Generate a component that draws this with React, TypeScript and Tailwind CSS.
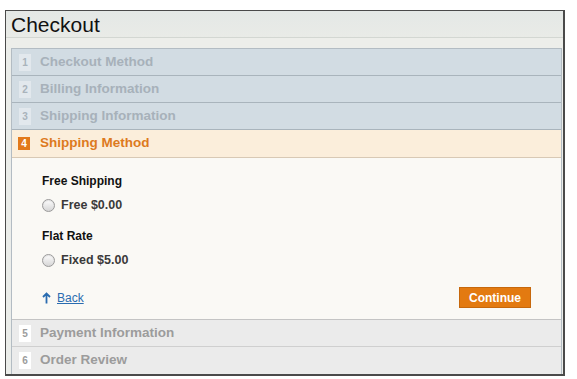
import React from "react";

const font = { fontFamily: '"Liberation Sans", Arial, sans-serif' };

const doneSteps = ["Checkout Method", "Billing Information", "Shipping Information"];
const nextSteps = ["Payment Information", "Order Review"];

const Radio = ({ label }: { label: string }) => (
    <label className="flex h-[14px] items-center gap-[6px]">
        <span className="h-[13px] w-[13px] rounded-full border border-[#9a9a9a] bg-gradient-to-b from-[#fdfdfd] to-[#d6d6d6] shadow-[inset_0_1px_1px_rgba(0,0,0,0.1)]" />
        <span className="text-[12.5px] font-bold leading-[14px] text-[#3a3a3a]">{label}</span>
    </label>
);

export default function App() {
    return (
        <div className="min-h-screen w-[577px] bg-white pl-[5px] pt-[10px]" style={font}>
            <div className="flex w-[560px] flex-col border border-[#4a4a4a] border-r-2 border-b-2 bg-[#ebedea]">
                <div className="flex h-[27px] items-center border-b border-[#d3d7d2] bg-gradient-to-b from-[#e4e8e6] to-[#e9ebe7] pl-[5px]">
                    <h1 className="text-[21px] leading-none text-[#111]">Checkout</h1>
                </div>
                <div className="h-[10px] bg-[#edeeea]" />
                <div className="ml-[5px] mr-[1px] flex flex-col border-x border-t border-[#b3bcc3]">
                    {doneSteps.map((s, i) => (
                        <div key={s} className="flex h-[27px] items-center border-b border-[#a9b4bc] bg-[#d2dce3] pl-[7px]">
                            <span className="flex h-[17px] w-[12px] items-center justify-center bg-[#e2e8ed] text-[10px] font-bold text-[#a9b3bb]">{i + 1}</span>
                            <span className="ml-[9px] text-[13.5px] font-bold text-[#a7b1ba]">{s}</span>
                        </div>
                    ))}
                    <div className="flex h-[28px] items-center border-b border-[#d8c9b5] bg-[#fbeedb] pl-[6px]">
                        <span className="flex h-[13px] w-[12px] items-center justify-center bg-[#e2791b] text-[10px] font-bold text-white">4</span>
                        <span className="ml-[10px] text-[13.5px] font-bold text-[#dd7a1e]">Shipping Method</span>
                    </div>
                    <div className="flex h-[162px] flex-col border-b border-[#c4c4c4] bg-[#faf9f5] pl-[30px] pr-[30px] pt-[15px]">
                        <div className="text-[12px] font-bold leading-[16px] text-[#111]">Free Shipping</div>
                        <div className="mt-[9px]"><Radio label="Free $0.00" /></div>
                        <div className="mt-[16px] text-[12px] font-bold leading-[16px] text-[#111]">Flat Rate</div>
                        <div className="mt-[9px]"><Radio label="Fixed $5.00" /></div>
                        <div className="mt-[20px] flex items-center justify-between">
                            <a className="flex items-center gap-[6px] text-[12px] text-[#2a6cb0] underline">
                                <svg width="9" height="12" viewBox="0 0 9 12" fill="none" stroke="#2a6cb0" strokeWidth="1.8">
                                    <path d="M4.5 11.5V1.5M1 5l3.5-3.5L8 5" />
                                </svg>
                                Back
                            </a>
                            <button className="h-[21px] w-[72px] border border-[#c6680c] bg-[#e37a10] text-[12px] font-bold text-white">Continue</button>
                        </div>
                    </div>
                    {nextSteps.map((s, i) => (
                        <div key={s} className="flex h-[27px] items-center border-b border-[#cfcfcf] bg-[#ebebeb] pl-[7px] last:border-b-0">
                            <span className="flex h-[17px] w-[12px] items-center justify-center bg-white text-[10px] font-bold text-[#9c9c9c]">{i + 5}</span>
                            <span className="ml-[9px] text-[13.5px] font-bold text-[#9c9c9c]">{s}</span>
                        </div>
                    ))}
                </div>
            </div>
        </div>
    );
}
